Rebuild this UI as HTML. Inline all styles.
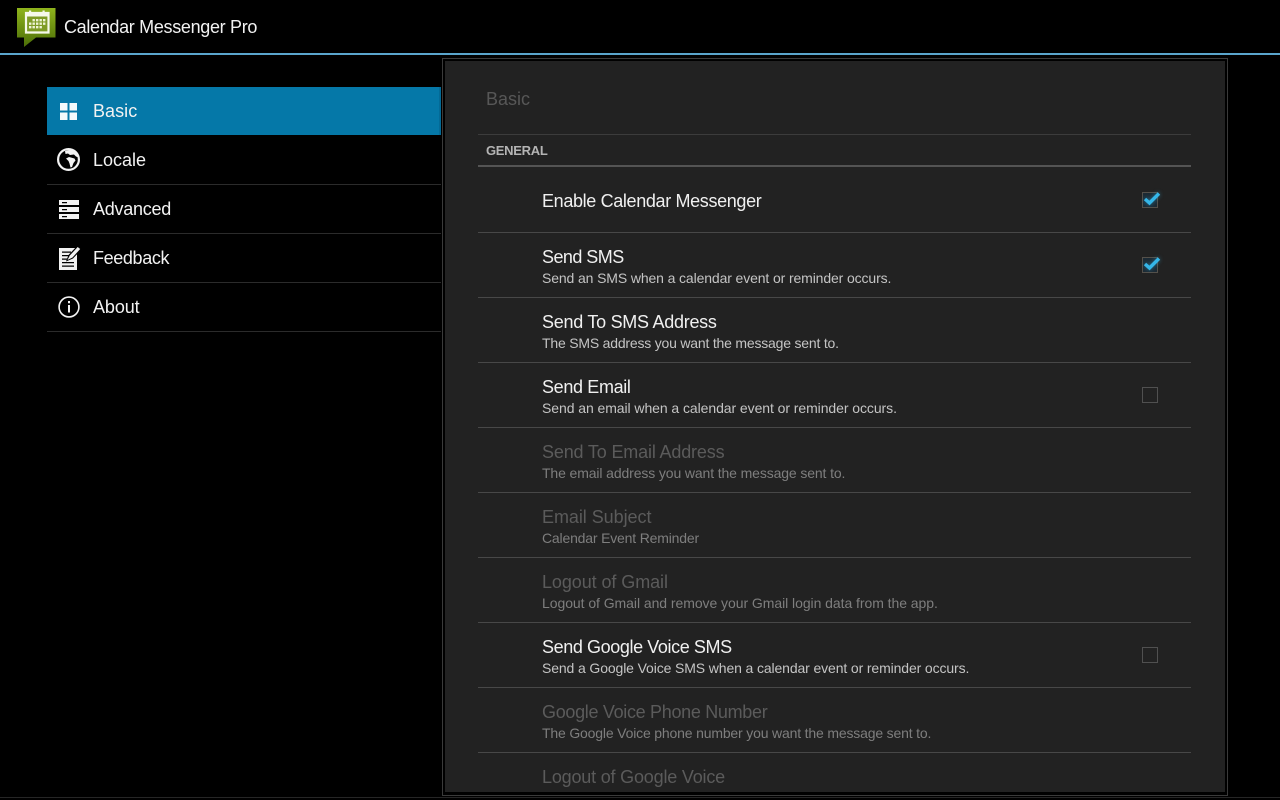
<!DOCTYPE html>
<html><head><meta charset="utf-8"><style>
html,body{margin:0;padding:0;background:#000;width:1280px;height:800px;overflow:hidden}
body{position:relative;font-family:"Liberation Sans",sans-serif;color:#f0f0f0}
div{position:absolute;white-space:nowrap}
svg{position:absolute;overflow:visible}
.nav{left:93px;font-size:18px;line-height:24px;color:#f2f2f2}
.sep{left:47px;width:394px;height:1px;background:#2b2b2b}
.l{left:478px;width:713px;height:1px;background:#484848}
.t{left:542px;font-size:18px;line-height:24px;color:#f0f0f0;letter-spacing:-.35px}
.s{left:542px;font-size:14px;line-height:18px;color:#c4c4c4;letter-spacing:-.12px}
.t.d{color:#5b5b5b}
.s.d{color:#7e7e7e}
.cb{left:1142px;width:14px;height:14px;border:1px solid #505050}
.cb.on{border-color:#54504a;background:#1c2a34}
.chk{filter:drop-shadow(0 0 2px rgba(51,181,229,.5))}
</style></head><body>
<div style="left:0;top:53px;width:1280px;height:2px;background:#5aa5cc"></div>
<svg style="left:17px;top:8px" width="40" height="40" viewBox="0 0 40 40">
<defs><linearGradient id="g" x1="0" y1="0" x2="0" y2="1"><stop offset="0" stop-color="#8fb41c"/><stop offset="1" stop-color="#4c6e08"/></linearGradient></defs>
<path d="M0 0H38.500V29.500H19L7 39V29.500H0Z" fill="url(#g)"/>
<path d="M9 5H31.500V24.500H9Z" fill="#7f9c26" stroke="#f6f9ea" stroke-width="2.200"/>
<path d="M8 4h24.500v4.500H8z" fill="#f6f9ea"/>
<path d="M12 2.500h2.200v3h-2.200zM25.500 2.500h2.200v3h-2.200z" fill="#f6f9ea"/>
<path d="M15.500 11h2.400v2.400h-2.400zM19 11h2.400v2.400h-2.400zM22.500 11h2.400v2.400h-2.400zM26 11h2.400v2.400h-2.400zM12 14.500h2.400v2.400h-2.400zM15.500 14.500h2.400v2.400h-2.400zM19 14.500h2.400v2.400h-2.400zM22.500 14.500h2.400v2.400h-2.400zM26 14.500h2.400v2.400h-2.400zM12 18h2.400v2.400h-2.400zM15.500 18h2.400v2.400h-2.400zM19 18h2.400v2.400h-2.400zM22.500 18h2.400v2.400h-2.400z" fill="#eef4d4"/>
</svg>
<div style="left:64px;top:15px;font-size:18px;line-height:24px;color:#f2f2f2;letter-spacing:-.32px">Calendar Messenger Pro</div>

<div style="left:47px;top:87px;width:392px;height:48px;background:#0578a8"></div>
<div style="left:439px;top:87px;width:2px;height:48px;background:#046a96"></div>
<svg style="left:60px;top:103px" width="17" height="17"><path d="M0 0h7.500v7.500H0zM9.500 0h7.500v7.500H9.500zM0 9.500h7.500v7.500H0zM9.500 9.500h7.500v7.500H9.500z" fill="#f4fafc"/></svg>
<div class="nav" style="top:99px;letter-spacing:.05px">Basic</div>
<div class="sep" style="top:184px"></div>
<div class="sep" style="top:233px"></div>
<div class="sep" style="top:282px"></div>
<div class="sep" style="top:331px"></div>

<svg style="left:57px;top:148px" width="23" height="23" viewBox="0 0 23 23">
<circle cx="11.500" cy="11.500" r="10.400" fill="#000" stroke="#f2f2f2" stroke-width="2.200"/>
<path d="M8 3L14 1.500L20 5L21.500 9.500L19 8.500L17 6.500L13 7L11 5.500L8.500 6Z" fill="#f2f2f2"/>
<path d="M9 10.500L12 9L17.500 10.500L18.500 12.500L16.500 15L15 19L13.500 19.500L12.500 15.500L11.500 13Z" fill="#f2f2f2"/>
</svg>
<div class="nav" style="top:148px">Locale</div>

<svg style="left:59px;top:200px" width="20" height="19" viewBox="0 0 20 19">
<path d="M0 0h20v5H0zM0 7h20v5H0zM0 14h20v5H0z" fill="#f2f2f2"/>
<path d="M3 2h5v1.200H3zM3 9h5v1.200H3zM3 16h5v1.200H3z" fill="#000"/>
</svg>
<div class="nav" style="top:197px;letter-spacing:-.25px">Advanced</div>

<svg style="left:59px;top:245px" width="23" height="25" viewBox="0 0 23 25">
<path d="M0 3H18V25H0Z" fill="#f2f2f2"/>
<path d="M3 6.500h9v1.300H3zM3 10h7v1.300H3zM3 13.500h6v1.300H3zM3 17h12v1.300H3zM3 20.500h12v1.300H3z" fill="#000"/>
<path d="M7 16.500L9.500 10L18.500 0.500L23 4L14 13.500Z" fill="#000"/>
<path d="M8.500 15L10.800 10.500L18.700 2L21.200 4L13.500 12.500Z" fill="#f2f2f2"/>
</svg>
<div class="nav" style="top:246px;letter-spacing:-.37px">Feedback</div>

<svg style="left:58px;top:296px" width="22" height="22" viewBox="0 0 22 22">
<circle cx="11" cy="11" r="9.900" fill="none" stroke="#f2f2f2" stroke-width="1.600"/>
<path d="M10 5h2v2.200h-2zM10 9h2v7.500h-2z" fill="#f2f2f2"/>
</svg>
<div class="nav" style="top:295px;letter-spacing:-.1px">About</div>

<div style="left:442px;top:58px;width:784px;height:736px;border:1px solid #3a3a3a"></div>
<div style="left:445px;top:61px;width:780px;height:731px;background:#222"></div>
<div style="left:0;top:797px;width:1280px;height:1px;background:#262626"></div>

<div style="left:486px;top:87px;font-size:18px;line-height:24px;color:#575757">Basic</div>
<div class="l" style="top:134px;background:#3c3c3c"></div>
<div style="left:486px;top:142px;font-size:13px;line-height:18px;font-weight:bold;color:#b4b4b4;letter-spacing:-.3px">GENERAL</div>
<div class="l" style="top:165px;height:2px;background:#545454"></div>

<div class="t" style="top:189px">Enable Calendar Messenger</div>
<div class="l" style="top:232px"></div>
<div class="t" style="top:245px;letter-spacing:-.55px">Send SMS</div>
<div class="s" style="top:269px">Send an SMS when a calendar event or reminder occurs.</div>
<div class="l" style="top:297px"></div>
<div class="t" style="top:310px;letter-spacing:-.27px">Send To SMS Address</div>
<div class="s" style="top:334px;letter-spacing:-.2px">The SMS address you want the message sent to.</div>
<div class="l" style="top:362px"></div>
<div class="t" style="top:375px">Send Email</div>
<div class="s" style="top:399px;letter-spacing:-.07px">Send an email when a calendar event or reminder occurs.</div>
<div class="l" style="top:427px"></div>
<div class="t d" style="top:440px;letter-spacing:-.16px">Send To Email Address</div>
<div class="s d" style="top:464px">The email address you want the message sent to.</div>
<div class="l" style="top:492px"></div>
<div class="t d" style="top:505px;letter-spacing:-.05px">Email Subject</div>
<div class="s d" style="top:529px;letter-spacing:-.18px">Calendar Event Reminder</div>
<div class="l" style="top:557px"></div>
<div class="t d" style="top:570px;letter-spacing:-.08px">Logout of Gmail</div>
<div class="s d" style="top:594px;letter-spacing:-.055px">Logout of Gmail and remove your Gmail login data from the app.</div>
<div class="l" style="top:622px"></div>
<div class="t" style="top:635px;letter-spacing:-.4px">Send Google Voice SMS</div>
<div class="s" style="top:659px">Send a Google Voice SMS when a calendar event or reminder occurs.</div>
<div class="l" style="top:687px"></div>
<div class="t d" style="top:700px;letter-spacing:-.31px">Google Voice Phone Number</div>
<div class="s d" style="top:724px;letter-spacing:-.17px">The Google Voice phone number you want the message sent to.</div>
<div class="l" style="top:752px"></div>
<div class="t d" style="top:765px;letter-spacing:-.19px">Logout of Google Voice</div>

<div class="cb on" style="top:192px"></div>
<svg class="chk" style="left:1142px;top:191px" width="20" height="16"><path d="M3 8L7.500 12L17 2.500" fill="none" stroke="#35b6e8" stroke-width="3.400"/></svg>
<div class="cb on" style="top:257px"></div>
<svg class="chk" style="left:1142px;top:256px" width="20" height="16"><path d="M3 8L7.500 12L17 2.500" fill="none" stroke="#35b6e8" stroke-width="3.400"/></svg>
<div class="cb" style="top:387px"></div>
<div class="cb" style="top:647px"></div>
</body></html>
